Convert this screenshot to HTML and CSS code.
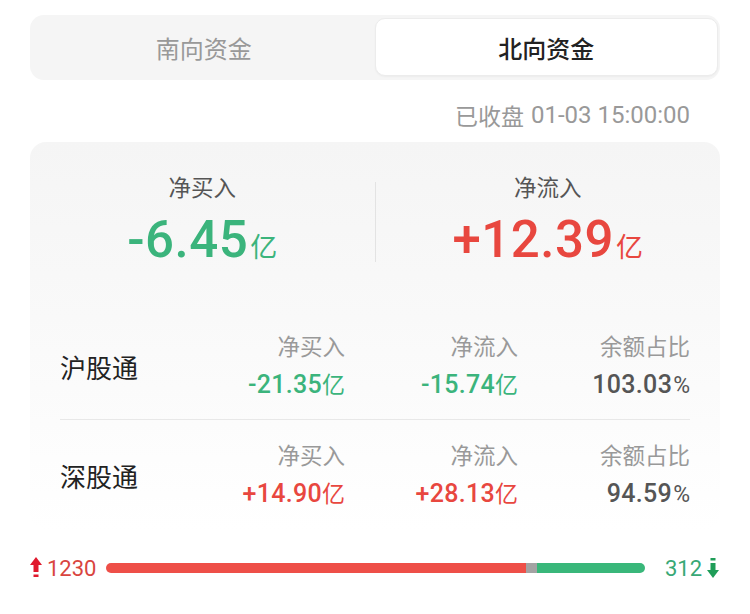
FILE: index.html
```html
<!DOCTYPE html>
<html lang="zh">
<head>
<meta charset="utf-8">
<link rel="stylesheet" href="styles.css">
</head>
<body>
<div class="page">
  <div class="tabs">
    <div class="tab">南向资金</div>
    <div class="tab active">北向资金</div>
  </div>
  <div class="time">已收盘 <span class="tnum">01-03 15:00:00</span></div>
  <div class="card">
    <div class="summary">
      <div class="half">
        <div class="s-label">净买入</div>
        <div class="s-value green"><span class="num">-6.45</span><span class="unit">亿</span></div>
      </div>
      <div class="vdiv"></div>
      <div class="half">
        <div class="s-label">净流入</div>
        <div class="s-value red"><span class="num">+12.39</span><span class="unit">亿</span></div>
      </div>
    </div>
    <div class="row first">
      <div class="name">沪股通</div>
      <div class="lbl">净买入</div>
      <div class="lbl">净流入</div>
      <div class="lbl">余额占比</div>
      <div class="val green"><span class="num">-21.35</span>亿</div>
      <div class="val green"><span class="num">-15.74</span>亿</div>
      <div class="val dark"><span class="num">103.03</span><span class="pct">%</span></div>
    </div>
    <div class="row second">
      <div class="name">深股通</div>
      <div class="lbl">净买入</div>
      <div class="lbl">净流入</div>
      <div class="lbl">余额占比</div>
      <div class="val red"><span class="num">+14.90</span>亿</div>
      <div class="val red"><span class="num">+28.13</span>亿</div>
      <div class="val dark"><span class="num">94.59</span><span class="pct">%</span></div>
    </div>
  </div>
  <div class="barrow">
    <div class="cnt up">
      <svg class="arrow" width="12" height="22" viewBox="0 0 12 22"><path d="M6 0 L12 8 L8.5 8 L8.5 15 L3.5 15 L3.5 8 L0 8 Z" fill="#e0192d"/><rect x="3.5" y="17.5" width="5" height="2.5" fill="#e0192d"/></svg>
      <span>1230</span>
    </div>
    <div class="bar">
      <div class="seg seg-red" style="width:78%"></div>
      <div class="seg seg-grey" style="width:2%"></div>
      <div class="seg seg-green"></div>
    </div>
    <div class="cnt down">
      <span>312</span>
      <svg class="arrow" width="12" height="22" viewBox="0 0 12 22"><rect x="3.5" y="1" width="5" height="2.5" fill="#1f9d58"/><path d="M3.5 6 L8.5 6 L8.5 13 L12 13 L6 21 L0 13 L3.5 13 Z" fill="#1f9d58"/></svg>
    </div>
  </div>
</div>
</body>
</html>
```

FILE: styles.css
```css
html, body {
  margin: 0;
  padding: 0;
  background: #ffffff;
}
body {
  font-family: "Noto Sans CJK SC", "Noto Sans", sans-serif;
  color: #222;
}
.page {
  width: 690px;
  padding: 15px 30px 0;
}
.tabs {
  height: 65px;
  box-sizing: border-box;
  background: #f5f5f5;
  border-radius: 14px;
  padding: 3px 2px 4px 3px;
  display: flex;
}
.tab {
  flex: 1;
  display: flex;
  align-items: center;
  justify-content: center;
  font-size: 24px;
  color: #999;
  border-radius: 10px;
}
.tab.active {
  background: #fff;
  color: #222;
  font-weight: 500;
  border: 1px solid #ececec;
  box-shadow: 0 1px 2px rgba(0,0,0,0.04);
}
.time {
  margin-top: 20px;
  height: 30px;
  display: flex;
  justify-content: flex-end;
  align-items: center;
  gap: 7px;
  padding-right: 30px;
  font-size: 23px;
  line-height: 30px;
  color: #999;
}
.num, .cnt span, .tnum, .pct {
  font-family: Roboto, "Noto Sans CJK SC", sans-serif;
}
.tnum {
  font-size: 24px;
}
.card {
  margin-top: 12px;
  border-radius: 16px;
  background: linear-gradient(to bottom, #f5f5f5 0%, #f9f9f9 45%, #ffffff 100%);
  height: 388px;
  box-sizing: border-box;
  padding-top: 29px;
}
.summary {
  display: flex;
}
.half {
  flex: 1;
  display: flex;
  flex-direction: column;
  align-items: center;
}
.vdiv {
  width: 1px;
  height: 80px;
  margin-top: 11px;
  background: #e3e3e3;
}
.s-label {
  font-size: 22.5px;
  line-height: 30px;
  color: #555;
}
.s-value {
  margin-top: 11px;
  line-height: 56px;
  height: 56px;
  display: flex;
  align-items: baseline;
}
.s-value .num {
  font-size: 51px;
  font-weight: 500;
  letter-spacing: 0.5px;
}
.s-value .unit {
  font-size: 27px;
  margin-left: 2px;
}
.green { color: #3bb47c; }
.red { color: #e8473f; }
.dark { color: #555; }
.row {
  display: grid;
  grid-template-columns: 112px 173px 173px 172px;
  grid-template-rows: 28px 28px;
  row-gap: 10px;
  margin: 0 30px;
  padding: 21px 0 22px;
}
.row.first {
  margin-top: 42px;
  border-bottom: 1px solid #e8e8e8;
}
.row.second {
  padding-top: 20px;
}
.name {
  grid-row: 1 / span 2;
  align-self: center;
  font-size: 26px;
  color: #222;
  padding-top: 4px;
}
.lbl {
  text-align: right;
  font-size: 22.5px;
  line-height: 28px;
  color: #999;
}
.val {
  text-align: right;
  font-size: 23px;
  line-height: 28px;
}
.val .num {
  font-size: 25px;
  font-weight: 500;
  letter-spacing: 0.3px;
}
.val .pct {
  font-size: 23px;
  margin-left: 1px;
}
.barrow {
  margin-top: 27px;
  height: 22px;
  display: flex;
  align-items: center;
}
.cnt {
  display: flex;
  align-items: center;
  font-size: 22px;
}
.cnt.up { color: #d9453f; }
.cnt.down { color: #38a875; margin-right: 1px; }
.cnt.up .arrow { margin-right: 5px; }
.cnt.down .arrow { margin-left: 5px; }
.bar {
  flex: 1;
  height: 10px;
  margin: 0 20px 0 10px;
  border-radius: 5px;
  overflow: hidden;
  display: flex;
}
.seg { height: 100%; }
.seg-red { background: #ee4f48; }
.seg-grey { background: #a3a3a3; }
.seg-green { flex: 1; background: #39b77a; }
```
